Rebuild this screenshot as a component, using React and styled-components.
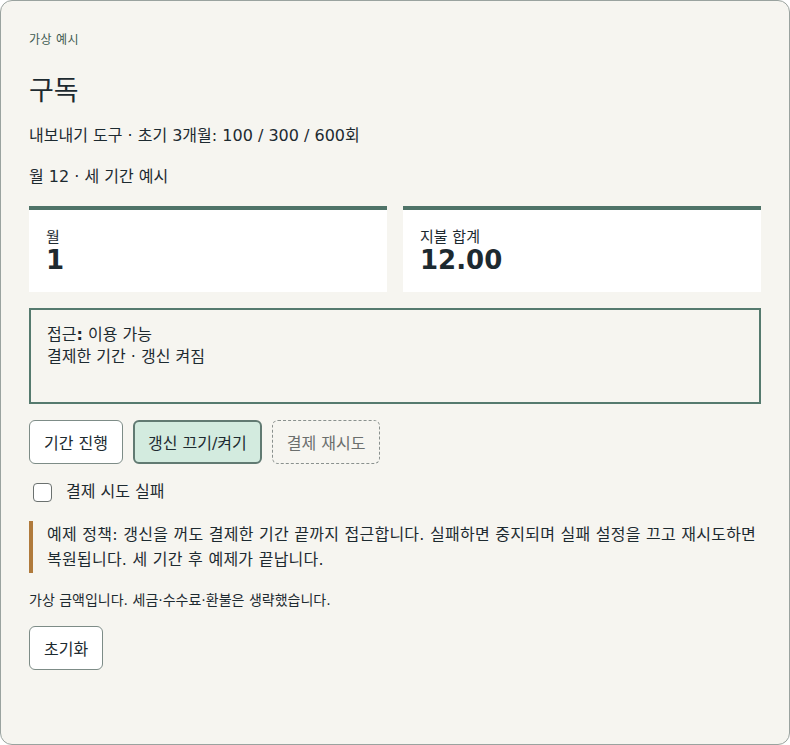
import React, { useState } from "react";
import styled, { createGlobalStyle } from "styled-components";

const Global = createGlobalStyle`
  html, body { margin: 0; padding: 0; background: #ffffff; }
  body { font-family: "DejaVu Sans", "Noto Sans CJK KR", sans-serif; color: #1d2a30; }
  * { box-sizing: border-box; }
`;

const Card = styled.main`
  width: 790px;
  min-height: 745px;
  background: #f6f5f0;
  border: 1px solid #9aa39f;
  border-radius: 12px;
  padding: 31px 28px 28px;
`;

const Eyebrow = styled.div`
  font-size: 12px;
  line-height: 17px;
  color: #3d5a50;
  letter-spacing: 0.4px;
`;

const Title = styled.h1`
  font-size: 27px;
  font-weight: 400;
  margin: 26px 0 0;
  line-height: 32px;
`;

const Line = styled.p`
  font-size: 16px;
  margin: ${(p) => p.$top || 0}px 0 0;
  line-height: 22px;
`;

const Stats = styled.div`
  display: grid;
  grid-template-columns: 1fr 1fr;
  gap: 16px;
  margin-top: 18px;
`;

const Stat = styled.div`
  background: #ffffff;
  border-top: 4px solid #4f7368;
  padding: 17px 17px 0;
  height: 86px;
`;

const StatLabel = styled.div`
  font-size: 15px;
  line-height: 20px;
`;

const StatValue = styled.div`
  font-size: 26px;
  font-weight: 700;
  line-height: 27px;
`;

const Access = styled.div`
  margin-top: 16px;
  border: 2px solid #557a6e;
  height: 96px;
  padding: 14px 16px;
  font-size: 16px;
  line-height: 22px;
`;

const Buttons = styled.div`
  display: flex;
  gap: 10px;
  margin-top: 16px;
`;

const Button = styled.button`
  font-family: inherit;
  font-size: 16px;
  height: 44px;
  padding: 0 ${(p) => (p.$active ? 13 : 14)}px;
  border-radius: 6px;
  color: ${(p) => (p.$disabled ? "#6b6f6d" : "#1d2a30")};
  background: ${(p) => (p.$active ? "#d3ebdf" : p.$disabled ? "transparent" : "#ffffff")};
  border: ${(p) =>
    p.$active ? "2px solid #617a72" : p.$disabled ? "1px dashed #8a918e" : "1px solid #7d8c87"};
  cursor: pointer;
`;

const CheckRow = styled.label`
  display: flex;
  align-items: center;
  gap: 14px;
  margin-top: 17px;
  padding-left: 4px;
  font-size: 16px;
  line-height: 22px;
`;

const Box = styled.input`
  appearance: none;
  width: 19px;
  height: 19px;
  margin: 0;
  border: 1.5px solid #6b716f;
  border-radius: 4px;
  background: #ffffff;
`;

const Policy = styled.blockquote`
  margin: 18px 0 0;
  border-left: 4px solid #b07a3c;
  padding: 1px 0 1px 14px;
  font-size: 16px;
  line-height: 25px;
  letter-spacing: 0.25px;
`;

const Note = styled.p`
  font-size: 14px;
  line-height: 20px;
  margin: 17px 0 0;
`;

const ResetWrap = styled.div`
  margin-top: 16px;
`;

export default function App() {
  const [renew, setRenew] = useState(true);
  const [fail, setFail] = useState(false);
  return (
    <>
      <Global />
      <Card>
        <Eyebrow>가상 예시</Eyebrow>
        <Title>구독</Title>
        <Line $top={18}>내보내기 도구 · 초기 3개월: 100 / 300 / 600회</Line>
        <Line $top={19}>월 12 · 세 기간 예시</Line>
        <Stats>
          <Stat>
            <StatLabel>월</StatLabel>
            <StatValue>1</StatValue>
          </Stat>
          <Stat>
            <StatLabel>지불 합계</StatLabel>
            <StatValue>12.00</StatValue>
          </Stat>
        </Stats>
        <Access>
          <div>
            접근<b>:</b> 이용 가능
          </div>
          <div>결제한 기간 · 갱신 {renew ? "켜짐" : "꺼짐"}</div>
        </Access>
        <Buttons>
          <Button>기간 진행</Button>
          <Button $active onClick={() => setRenew(!renew)}>
            갱신 끄기/켜기
          </Button>
          <Button $disabled>결제 재시도</Button>
        </Buttons>
        <CheckRow>
          <Box type="checkbox" checked={fail} onChange={() => setFail(!fail)} />
          결제 시도 실패
        </CheckRow>
        <Policy>
          예제 정책: 갱신을 꺼도 결제한 기간 끝까지 접근합니다. 실패하면 중지되며 실패 설정을 끄고
          재시도하면 복원됩니다. 세 기간 후 예제가 끝납니다.
        </Policy>
        <Note>가상 금액입니다. 세금·수수료·환불은 생략했습니다.</Note>
        <ResetWrap>
          <Button>초기화</Button>
        </ResetWrap>
      </Card>
    </>
  );
}
